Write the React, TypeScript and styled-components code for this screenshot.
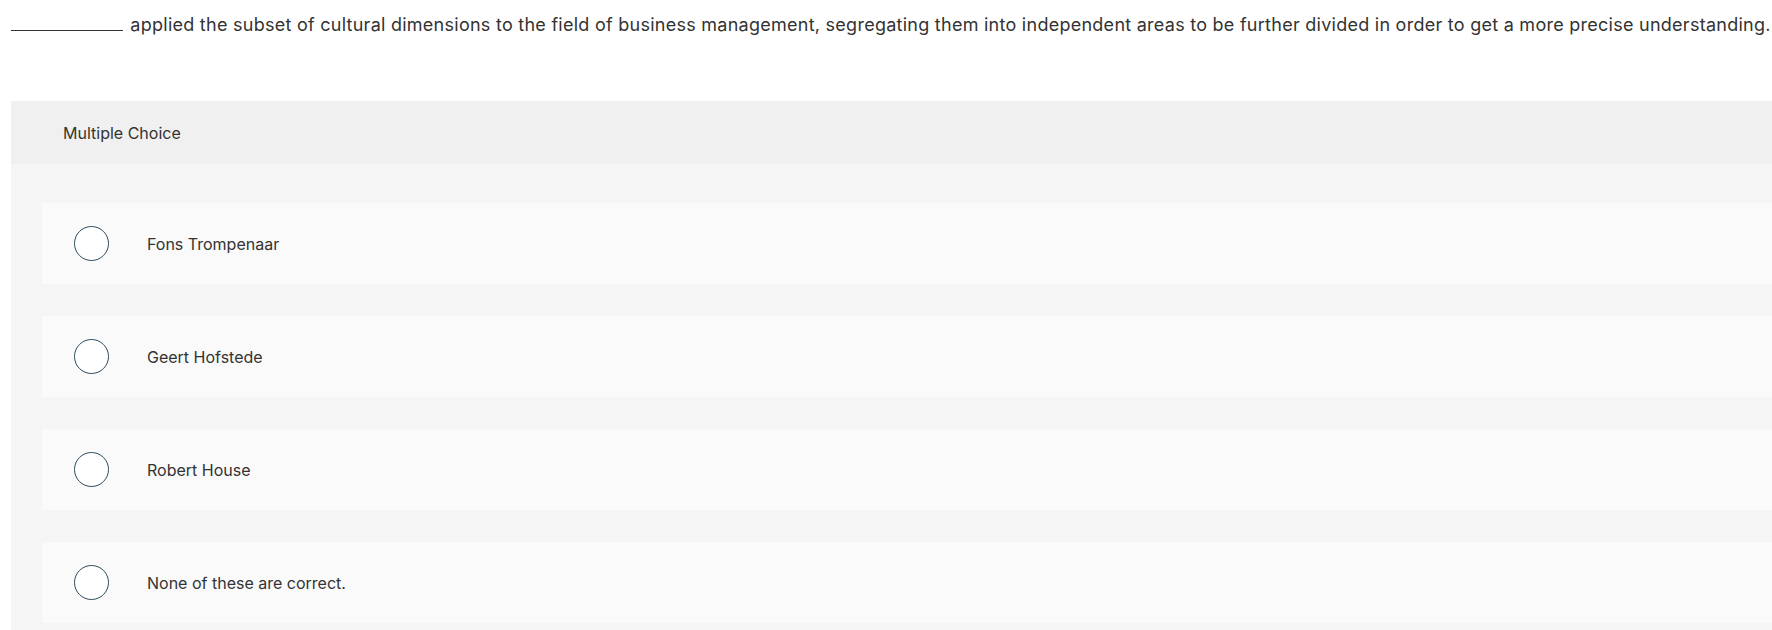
import React from "react";
import styled, { createGlobalStyle } from "styled-components";

const Global = createGlobalStyle`
  html, body { margin: 0; padding: 0; background: #ffffff; overflow: hidden; }
  body { font-family: Inter, "Liberation Sans", sans-serif; color: #333333; }
`;

const Page = styled.div`
  width: 1772px;
  height: 630px;
  overflow: hidden;
`;

const Prompt = styled.p`
  margin: 0;
  padding: 12px 0 0 11px;
  font-size: 18px;
  line-height: 24px;
  letter-spacing: 0.26px;
  white-space: nowrap;
  color: #333333;
`;

const Blank = styled.span`
  display: inline-block;
  width: 112px;
  height: 18px;
  border-bottom: 1px solid #333333;
  margin-right: 2px;
  vertical-align: baseline;
`;

const Panel = styled.section`
  margin: 64px -40px 0 11px;
  background: #f5f5f5;
  padding-bottom: 40px;
`;

const PanelHeader = styled.div`
  height: 63px;
  background: #f0f0f0;
  display: flex;
  align-items: center;
  padding-left: 52px;
  font-size: 16px;
  color: #333333;
`;

const Options = styled.div`
  display: flex;
  flex-direction: column;
  gap: 32px;
  padding: 39px 0 0 31px;
`;

const Option = styled.label`
  height: 81px;
  background: #fafafa;
  display: flex;
  align-items: center;
  padding-left: 32px;
  gap: 38px;
  font-size: 16px;
  color: #333333;
  cursor: pointer;
`;

const Radio = styled.span`
  width: 35px;
  height: 35px;
  box-sizing: border-box;
  border-radius: 50%;
  border: 1.5px solid #2f4b5c;
  background: #ffffff;
  flex-shrink: 0;
`;

const options = [
  "Fons Trompenaar",
  "Geert Hofstede",
  "Robert House",
  "None of these are correct.",
];

export default function App() {
  return (
    <Page>
      <Global />
      <Prompt>
        <Blank />
        {" "}applied the subset of cultural dimensions to the field of business management, segregating them into independent areas to be further divided in order to get a more precise understanding.
      </Prompt>
      <Panel>
        <PanelHeader>Multiple Choice</PanelHeader>
        <Options>
          {options.map((o) => (
            <Option key={o}>
              <Radio />
              <span>{o}</span>
            </Option>
          ))}
        </Options>
      </Panel>
    </Page>
  );
}
